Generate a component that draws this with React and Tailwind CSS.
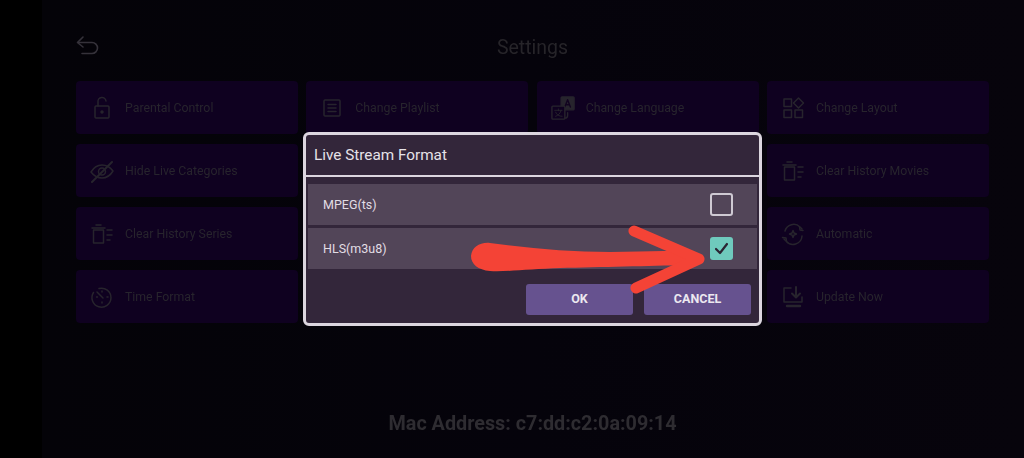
import React from "react";

const C = "#27242d";
const S = ({ children, w = 24, h = 24, vb = "0 0 24 24" }) => (
  <svg width={w} height={h} viewBox={vb} fill="none" stroke={C} strokeWidth="1.5" strokeLinecap="round" strokeLinejoin="round" className="shrink-0">
    {children}
  </svg>
);

const Lock = () => (
  <S>
    <rect x="5" y="10" width="14" height="12" rx="1" />
    <path d="M8 10V6a4 4 0 0 1 8-1" />
    <circle cx="12" cy="16" r="1" fill={C} />
  </S>
);
const Playlist = () => (
  <S>
    <rect x="4" y="4" width="16" height="16" rx="1" />
    <path d="M8 8.5h8M8 12h8M8 15.5h8" />
  </S>
);
const Lang = () => (
  <S vb="0 0 26 26">
    <rect x="11" y="1" width="14" height="14" rx="1" fill={C} />
    <path d="M15 12l3-8 3 8M16 9.5h4" stroke="#120320" />
    <rect x="1" y="11" width="14" height="14" rx="1" fill="#0f0120" />
    <path d="M4 15.5h8M8 14v2M5 22c3-1 5-3 6-6.5M5 17.5c1 3 4 4.5 7 4.5" strokeWidth="1" />
    <path d="M18 18v3a3 3 0 0 1-3 3" />
  </S>
);
const Layout = () => (
  <S>
    <rect x="3" y="3" width="7.5" height="7.5" />
    <path d="M17.5 2l5 5-5 5-5-5z" />
    <rect x="3" y="14" width="7.5" height="7.5" />
    <rect x="14" y="14" width="7.5" height="7.5" />
  </S>
);
const Eye = () => (
  <S>
    <path d="M1 13c3-5 7-7 11-7s8 2 11 6c-3 5-7 7-11 7s-8-2-11-6z" />
    <circle cx="12" cy="12.5" r="3.5" />
    <path d="M2 23L22 3" strokeWidth="2" />
  </S>
);
const Trash = () => (
  <S>
    <path d="M2 6h13M6 3h5" />
    <rect x="3.5" y="8" width="10" height="13" />
    <path d="M17 8h5M17 13h5M17 18h3" />
  </S>
);
const Clock = () => (
  <S>
    <path d="M9 3.5a9.5 9.5 0 1 1-5.5 4" />
    <path d="M7 7l6 6M12 6v1M18 12h-1M12 17v1M6.5 12h1" />
  </S>
);
const Auto = () => (
  <S>
    <path d="M4 9a9 9 0 0 1 15-4l2 2M21 14a9 9 0 0 1-16 5l-2-2" />
    <path d="M1.5 15.5L5 16l.5 3M22 8.5L19 8l-.5-3" />
    <path d="M12 8.5l1 2.5 2.5 1-2.5 1-1 2.5-1-2.5-2.5-1 2.5-1z" />
  </S>
);
const Update = () => (
  <S>
    <path d="M10 3H3v14h18v-5" />
    <path d="M15 2v10M11 8.5l4 4 4-4" strokeWidth="2" />
    <path d="M6 21h13" strokeWidth="2.5" />
  </S>
);

const cards = [
  ["Parental Control", Lock],
  ["Change Playlist", Playlist],
  ["Change Language", Lang],
  ["Change Layout", Layout],
  ["Hide Live Categories", Eye],
  ["", null],
  ["", null],
  ["Clear History Movies", Trash],
  ["Clear History Series", Trash],
  ["", null],
  ["", null],
  ["Automatic", Auto],
  ["Time Format", Clock],
  ["", null],
  ["", null],
  ["Update Now", Update],
];

function Card({ label, Icon }) {
  return (
    <div className="h-[53px] rounded-[4px] bg-[#0f0120] flex items-center pl-[14px] gap-[11px]">
      {Icon && <Icon />}
      <span className="pt-[2px] text-[12.3px] text-[#27242d]">{label}</span>
    </div>
  );
}

function Row({ label, checked }) {
  return (
    <div className="h-[41px] bg-[#524558] flex items-center justify-between pl-[15px] pr-[24px] text-[12.5px] text-[#e2dee5]">
      <span className="pt-[2px]">{label}</span>
      {checked ? (
        <div className="w-[23px] h-[23px] rounded-[3px] bg-[#6fcabd] flex items-center justify-center">
          <svg width="17" height="17" viewBox="0 0 17 17" fill="none" stroke="#2b2433" strokeWidth="2.2" strokeLinecap="round" strokeLinejoin="round">
            <path d="M3 9l4 4 7-9" />
          </svg>
        </div>
      ) : (
        <div className="w-[23px] h-[23px] rounded-[3px] border-2 border-[#cfcad3]" />
      )}
    </div>
  );
}

export default function App() {
  return (
    <div className="relative w-[1024px] h-[458px] overflow-hidden flex bg-black font-['Roboto',sans-serif]">
      <div className="w-[42px] shrink-0 bg-black" />
      <main className="flex-1 flex flex-col bg-gradient-to-r from-[#040308] via-[#05030b] to-[#07040c] pl-[34px] pr-[35px] blur-[0.4px]">
        <header className="relative h-[81px] shrink-0 flex items-center justify-center pt-[15px]">
          <div className="absolute left-0 top-[34px]">
            <svg width="24" height="24" viewBox="0 0 24 24" fill="none" stroke="#35323a" strokeWidth="1.6" strokeLinecap="round" strokeLinejoin="round">
              <path d="M7 3L1.5 8.5 7 13" />
              <path d="M2 8.5h14a5.5 5.5 0 0 1 0 11H6" />
            </svg>
          </div>
          <h1 className="text-[19.5px] text-[#262429]">Settings</h1>
        </header>
        <div className="grid grid-cols-4 gap-x-[8.3px] gap-y-[10px]">
          {cards.map(([label, Icon], i) => (
            <Card key={i} label={label} Icon={Icon} />
          ))}
        </div>
        <p className="mt-[86px] text-center text-[19.8px] font-bold text-[#2e2c31]">Mac Address: c7:dd:c2:0a:09:14</p>
      </main>

      <div className="absolute left-[303px] top-[132px] w-[459px] h-[194px] rounded-[6px] border-[3px] border-[#dcd6df] bg-[#33263a] flex flex-col overflow-hidden">
        <div className="h-[42px] shrink-0 border-b-2 border-[#dcd6df] flex items-center pl-[8px] text-[15.3px] text-[#e6e2e8]">
          Live Stream Format
        </div>
        <div className="flex flex-col gap-[3px] pt-[7px] px-[2px]">
          <Row label="MPEG(ts)" />
          <Row label="HLS(m3u8)" checked />
        </div>
        <div className="flex justify-end gap-[11px] pt-[15px] pr-[8px]">
          <button className="w-[107px] h-[31px] rounded-[3px] bg-[#66528f] text-[12.5px] font-bold text-[#ece8f0]">OK</button>
          <button className="w-[107px] h-[31px] rounded-[3px] bg-[#66528f] text-[12.5px] font-bold text-[#ece8f0]">CANCEL</button>
        </div>
      </div>

      <svg className="absolute left-0 top-0 pointer-events-none" width="1024" height="458" viewBox="0 0 1024 458" fill="none">
        <path d="M471 256C472 247 480 242 490 243C530 248 570 252 610 252C640 252 665 250 685 252L704 258L685 265C650 266 600 267 560 268C530 269 505 272 490 271C478 270 471 264 471 256Z" fill="#f44336" />
        <path d="M634 231L699 259L636 288" stroke="#f44336" strokeWidth="11" strokeLinecap="round" strokeLinejoin="round" />
      </svg>
    </div>
  );
}
